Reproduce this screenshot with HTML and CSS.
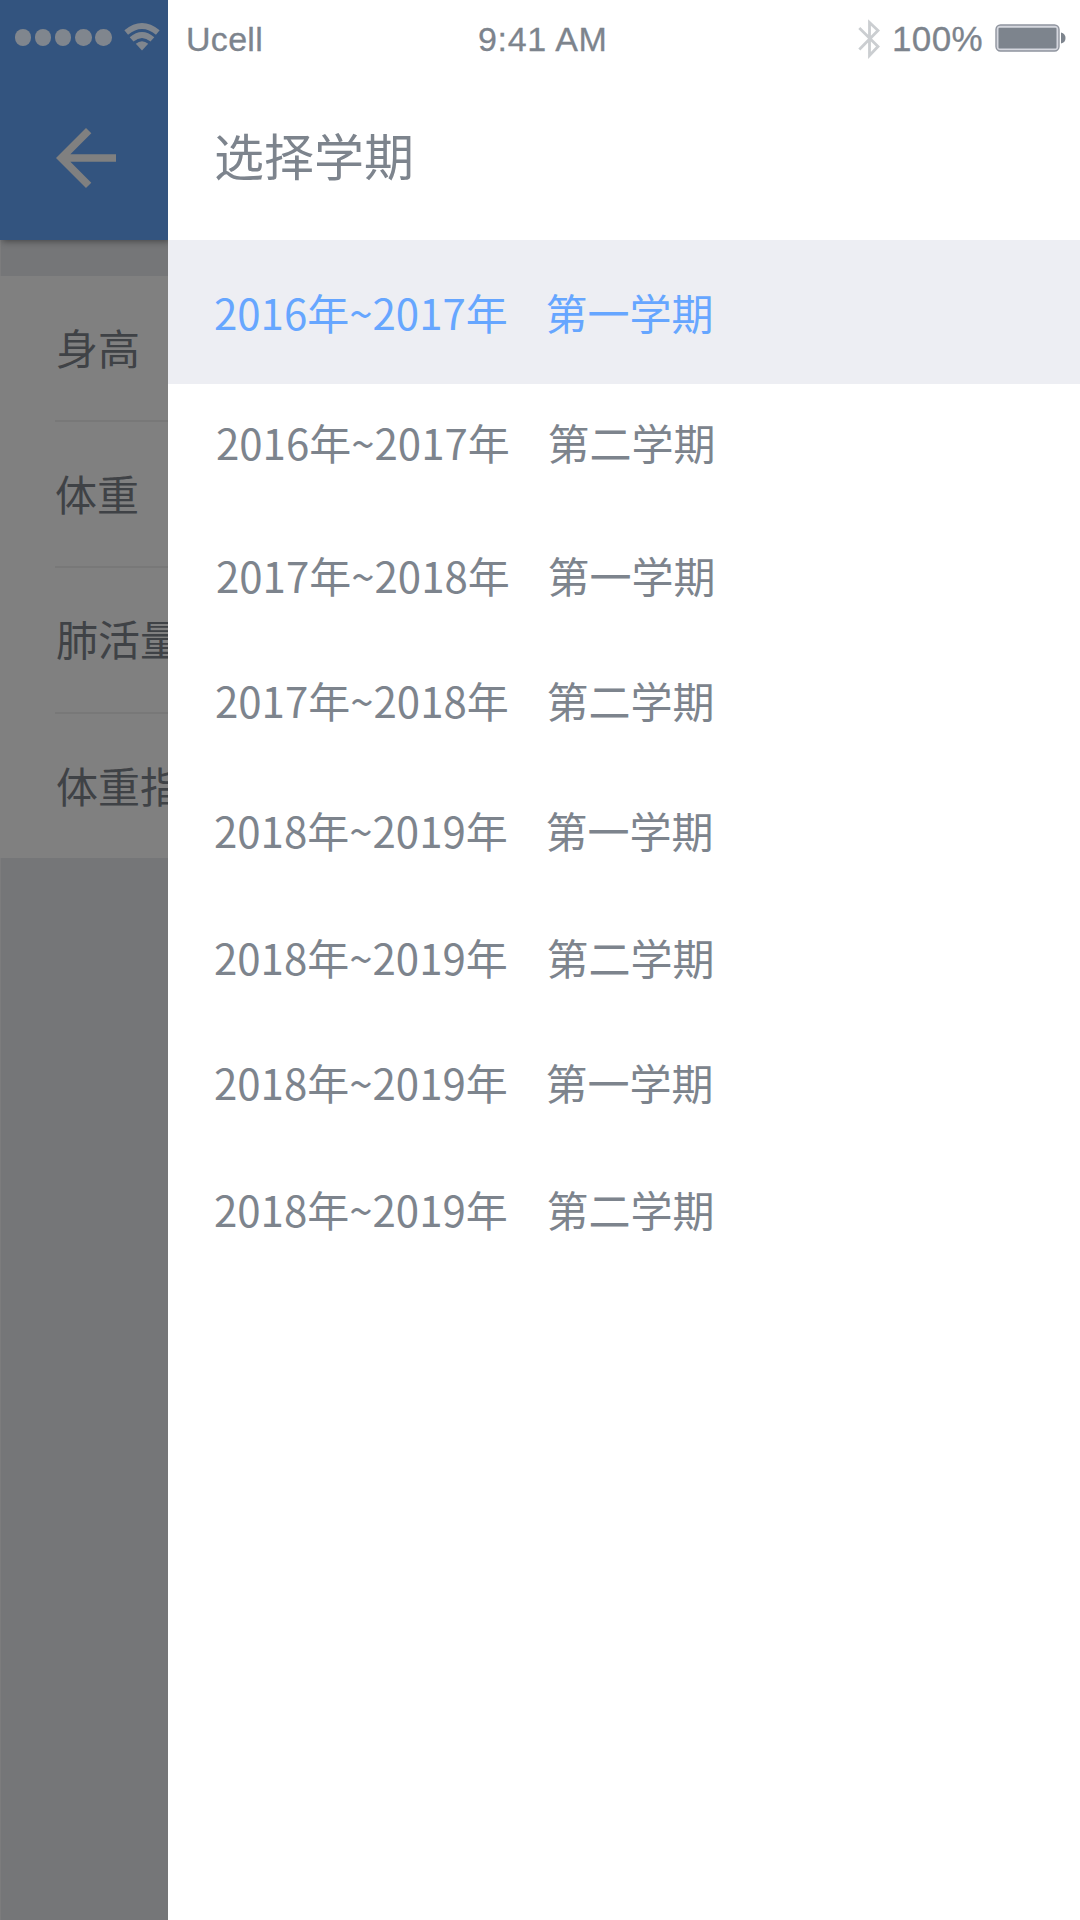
FILE: index.html
```
<!DOCTYPE html>
<html lang="zh-CN">
<head>
<meta charset="utf-8">
<title>选择学期</title>
<link rel="stylesheet" href="styles.css">
</head>
<body>
<div class="screen">
  <div class="page">
    <header class="page-header">
      <div class="signal">
        <i class="dot"></i><i class="dot"></i><i class="dot"></i><i class="dot"></i><i class="dot"></i>
        <svg class="wifi" viewBox="0 0 36 28" width="36" height="28">
          <g fill="none" stroke="#80868e" stroke-width="5.8">
            <path d="M2.2 9.6Q18-3.4 33.8 9.6"/>
            <path d="M7.6 16.4Q18 7.4 28.4 16.4"/>
          </g>
          <path fill="#80868e" d="M11.8 20.8Q18 15.6 24.2 20.8L18 27.4z"/>
        </svg>
      </div>
      <svg class="back" viewBox="0 0 24 24" width="90" height="90"><path fill="#808080" d="M20 11H7.83l5.59-5.59L12 4l-8 8 8 8 1.41-1.41L7.83 13H20v-2z"/></svg>
    </header>
    <ul class="metrics">
      <li class="metric"><span class="metric-name inset">身高</span></li>
      <li class="metric"><span class="metric-name">体重</span></li>
      <li class="metric raised"><span class="metric-name inset">肺活量</span></li>
      <li class="metric"><span class="metric-name inset">体重指数</span></li>
    </ul>
  </div>
  <aside class="drawer">
    <div class="status">
      <span class="carrier">Ucell</span>
      <span class="time">9:41 AM</span>
      <span class="power">
        <svg viewBox="0 0 22 40" width="22" height="40"><path fill="none" stroke="#cbced1" stroke-width="2.8" d="M1.3 9L20 27.5 11.5 36.5V3.5L20 11.5 1.3 30.5"/></svg>
        <span class="percent">100%</span>
        <svg class="battery" viewBox="0 0 72 28" width="72" height="28">
          <rect x="1" y="1" width="63" height="26" rx="4.5" fill="#d5d7de" stroke="#8f949e" stroke-width="1.4"/>
          <rect x="3.5" y="3.8" width="58" height="20.6" rx="1" fill="#7d848d"/>
          <path fill="#7d848d" d="M66 8.5Q70.5 9.5 70.5 14T66 19.5z"/>
        </svg>
      </span>
    </div>
    <h1 class="title">选择学期</h1>
    <ul class="terms">
      <li class="term active">2016年~2017年&nbsp;&nbsp;&nbsp;&nbsp;第一学期</li>
      <li class="term t2 shift">2016年~2017年&nbsp;&nbsp;&nbsp;&nbsp;第二学期</li>
      <li class="term t3 shift">2017年~2018年&nbsp;&nbsp;&nbsp;&nbsp;第一学期</li>
      <li class="term t4 nudge">2017年~2018年&nbsp;&nbsp;&nbsp;&nbsp;第二学期</li>
      <li class="term t5">2018年~2019年&nbsp;&nbsp;&nbsp;&nbsp;第一学期</li>
      <li class="term t6 wide">2018年~2019年&nbsp;&nbsp;&nbsp;&nbsp;第二学期</li>
      <li class="term t7">2018年~2019年&nbsp;&nbsp;&nbsp;&nbsp;第一学期</li>
      <li class="term t8 wide">2018年~2019年&nbsp;&nbsp;&nbsp;&nbsp;第二学期</li>
    </ul>
  </aside>
</div>
</body>
</html>
```
FILE: styles.css
```
* { box-sizing: border-box; }
body { margin: 0; }
ul { list-style: none; margin: 0; padding: 0; }
svg { display: block; flex: none; }

.screen {
  display: flex;
  width: 1080px;
  height: 1920px;
  overflow: hidden;
  font-family: "Noto Sans CJK SC", sans-serif;
  font-size: 42px;
  line-height: 60px;
  color: #7d848d;
}

/* Dimmed page behind the drawer */
.page {
  flex: none;
  width: 168px;
  overflow: hidden;
  background: linear-gradient(90deg, #7c7c7d 1px, #757678 1px);
}
.page-header {
  height: 240px;
  margin-bottom: 36px;
  background: #33547f;
  box-shadow: 2px 1px 7px rgba(0, 0, 0, .45);
}
.signal {
  display: flex;
  align-items: center;
  gap: 3.6px;
  height: 75px;
  padding-left: 14.8px;
}
.dot {
  flex: none;
  width: 16.5px;
  height: 16.5px;
  border-radius: 50%;
  background: #80868e;
}
.wifi { margin: 0 0 1px 8.5px; }
.back { margin: 38px 0 0 41px; }

.metrics {
  padding-left: 55px;
  background: #808080;
}
.metric {
  display: flex;
  align-items: center;
  height: 146px;
  padding-bottom: 2px;
  border-bottom: 2px solid #787878;
}
.raised { padding-bottom: 4px; }
.metric:last-child { height: 144px; border-bottom: 0; }
.metric-name { white-space: nowrap; color: #3f4246; }
.inset { padding-left: 1px; }

/* Drawer */
.drawer { flex: 1; background: #fff; }
.status {
  display: grid;
  grid-template-columns: 292px 398px 1fr;
  align-items: center;
  height: 78px;
  padding-left: 18px;
  font-family: "Liberation Sans", Arial, sans-serif;
  font-size: 34px;
  letter-spacing: .5px;
  white-space: nowrap;
}
.carrier, .time, .percent { -webkit-text-stroke: .3px #7d848d; }
.carrier { letter-spacing: .3px; }
.time { letter-spacing: .7px; }
.power { display: flex; align-items: center; margin-left: -18px; }
.percent { width: 103px; margin-left: 12px; font-size: 35px; letter-spacing: .4px; }
.battery { margin-bottom: 3px; }
.title {
  height: 162px;
  margin: 0;
  padding: 40px 0 0 46px;
  font-size: 50px;
  font-weight: 400;
  line-height: 72px;
}
.term { padding-left: 46px; white-space: nowrap; }
.active {
  padding-top: 42px;
  height: 144px;
  background: #edeef3;
  color: #66a6ff;
}
.shift { padding-left: 48px; }
.nudge { padding-left: 47px; }
.wide { word-spacing: .3px; }
.t2 { margin-top: 28px; }
.t3 { margin-top: 73px; }
.t4 { margin-top: 65px; }
.t5 { margin-top: 70px; }
.t6 { margin-top: 67px; }
.t7 { margin-top: 65px; }
.t8 { margin-top: 67px; }
```
